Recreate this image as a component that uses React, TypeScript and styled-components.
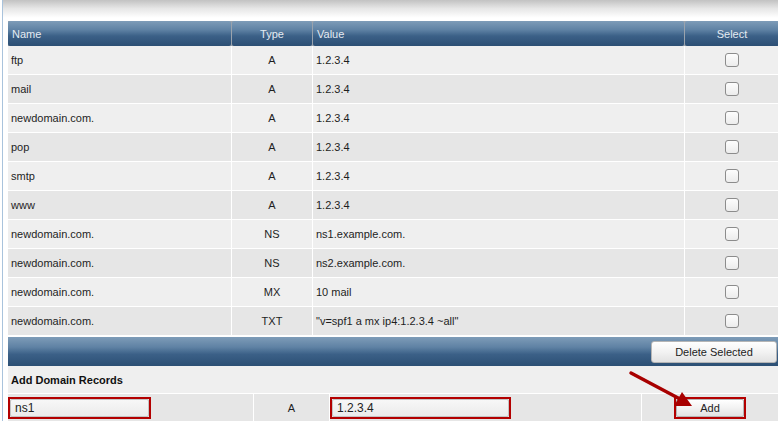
import styled, { createGlobalStyle } from "styled-components";

const GlobalStyle = createGlobalStyle`
  html, body {
    margin: 0;
    padding: 0;
    background: #ffffff;
    font-family: "Liberation Sans", Arial, sans-serif;
    overflow: hidden;
  }
`;

const COLS = "223px 80px 371px 1fr";

const Page = styled.div`
  position: relative;
  width: 778px;
  height: 421px;
  overflow: hidden;
  background: #fff;
`;

const TopBand = styled.div`
  height: 21px;
  margin-left: 2px;
  background: linear-gradient(#c2c2c2 0%, #e6e6e6 40%, #ffffff 85%);
`;

const Frame = styled.div`
  border-left: 1px solid #a9c3dc;
  margin-left: 2px;
  padding-left: 5px;
  margin-top: -21px;
  padding-top: 21px;
`;

const Table = styled.div`
  display: flex;
  flex-direction: column;
  width: 771px;
`;

const HeaderRow = styled.div`
  display: grid;
  grid-template-columns: ${COLS};
  column-gap: 1px;
  height: 25px;
  background: #9aa3ad;
`;

const HeadingCell = styled.div<{ $align?: string }>`
  display: flex;
  align-items: center;
  justify-content: ${(p) => p.$align || "flex-start"};
  padding: 0 4px;
  font-size: 11px;
  color: #e4ebf2;
  background: linear-gradient(#7e9cb8 0%, #5f82a4 35%, #3b6087 60%, #2c4f74 100%);
  border-radius: 2px;
`;

const Row = styled.div<{ $even?: boolean }>`
  display: grid;
  grid-template-columns: ${COLS};
  column-gap: 1px;
  height: 28px;
  border-bottom: 1px solid #ffffff;
  background: #ffffff;

  & > div {
    background: ${(p) => (p.$even ? "#e6e6e6" : "#efefef")};
  }
`;

const Cell = styled.div<{ $align?: string }>`
  display: flex;
  align-items: center;
  justify-content: ${(p) => p.$align || "flex-start"};
  padding: 0 3px;
  font-size: 11px;
  color: #1e1e1e;
  white-space: nowrap;
  overflow: hidden;
`;

const Checkbox = styled.span`
  display: inline-block;
  width: 12px;
  height: 12px;
  border: 1px solid #8c8c8c;
  border-radius: 3px;
  background: linear-gradient(#fdfdfd, #ececec);
`;

const FooterBar = styled.div`
  margin-top: 1px;
  height: 29px;
  display: flex;
  align-items: center;
  justify-content: flex-end;
  padding-right: 2px;
  background: linear-gradient(#7e9cb8 0%, #5f82a4 35%, #3b6087 60%, #2c4f74 100%);
`;

const Button = styled.button`
  font-family: "Liberation Sans", Arial, sans-serif;
  font-size: 11px;
  color: #222;
  height: 22px;
  padding: 0 8px;
  border: 1px solid #b5b5b5;
  border-radius: 3px;
  background: linear-gradient(#ffffff 0%, #f2f2f2 50%, #e2e2e2 100%);
  cursor: pointer;
`;

const DeleteButton = styled(Button)`
  width: 126px;
`;

const SectionTitle = styled.div`
  height: 27px;
  display: flex;
  align-items: center;
  padding-left: 3px;
  font-size: 11px;
  font-weight: bold;
  color: #111;
  background: #efefef;
  border-bottom: 1px solid #ffffff;
`;

const AddRow = styled.div`
  display: grid;
  grid-template-columns: 245px 75px 311px 1fr;
  column-gap: 1px;
  height: 28px;
  background: #ffffff;

  & > div {
    background: #e6e6e6;
  }
`;

const AddCell = styled.div<{ $align?: string }>`
  display: flex;
  align-items: center;
  justify-content: ${(p) => p.$align || "flex-start"};
  font-size: 11px;
  color: #1e1e1e;
`;

const Highlight = styled.div<{ $width: number; $offset?: number }>`
  width: ${(p) => p.$width}px;
  height: 22px;
  margin-left: ${(p) => p.$offset || 0}px;
  box-sizing: border-box;
  border: 2px solid #b30000;
  display: flex;
`;

const TextInput = styled.input`
  flex: 1;
  min-width: 0;
  box-sizing: border-box;
  border: 1px solid #c4c4c4;
  border-radius: 2px;
  padding: 0 4px;
  font-family: "Liberation Sans", Arial, sans-serif;
  font-size: 12px;
  color: #222;
  background: linear-gradient(#f7f7f7, #ebebeb);
  outline: none;
`;

const AddButton = styled(Button)`
  flex: 1;
  height: 100%;
  border-radius: 2px;
`;

const Arrow = styled.svg`
  position: absolute;
  left: 624px;
  top: 366px;
  pointer-events: none;
`;

const records = [
  ["ftp", "A", "1.2.3.4"],
  ["mail", "A", "1.2.3.4"],
  ["newdomain.com.", "A", "1.2.3.4"],
  ["pop", "A", "1.2.3.4"],
  ["smtp", "A", "1.2.3.4"],
  ["www", "A", "1.2.3.4"],
  ["newdomain.com.", "NS", "ns1.example.com."],
  ["newdomain.com.", "NS", "ns2.example.com."],
  ["newdomain.com.", "MX", "10 mail"],
  ["newdomain.com.", "TXT", "\"v=spf1 a mx ip4:1.2.3.4 ~all\""],
];

const App = () => {
  return (
    <Page>
      <GlobalStyle />
      <TopBand />
      <Frame>
        <Table>
          <HeaderRow>
            <HeadingCell>Name</HeadingCell>
            <HeadingCell $align="center">Type</HeadingCell>
            <HeadingCell>Value</HeadingCell>
            <HeadingCell $align="center">Select</HeadingCell>
          </HeaderRow>
          {records.map((r, i) => (
            <Row key={i} $even={i % 2 === 1}>
              <Cell>{r[0]}</Cell>
              <Cell $align="center">{r[1]}</Cell>
              <Cell>{r[2]}</Cell>
              <Cell $align="center">
                <Checkbox />
              </Cell>
            </Row>
          ))}
          <FooterBar>
            <DeleteButton>Delete Selected</DeleteButton>
          </FooterBar>
          <SectionTitle>Add Domain Records</SectionTitle>
          <AddRow>
            <AddCell>
              <Highlight $width={143}>
                <TextInput defaultValue="ns1" />
              </Highlight>
            </AddCell>
            <AddCell $align="center">A</AddCell>
            <AddCell>
              <Highlight $width={181}>
                <TextInput defaultValue="1.2.3.4" />
              </Highlight>
            </AddCell>
            <AddCell>
              <Highlight $width={72} $offset={32}>
                <AddButton>Add</AddButton>
              </Highlight>
            </AddCell>
          </AddRow>
        </Table>
      </Frame>
      <Arrow width="80" height="50" viewBox="0 0 80 50">
        <line x1="7" y1="7" x2="56" y2="33" stroke="#a80000" strokeWidth="3.5" strokeLinecap="round" />
        <polygon points="68,40 50,40 58,26" fill="#a80000" />
      </Arrow>
    </Page>
  );
};

export default App;
